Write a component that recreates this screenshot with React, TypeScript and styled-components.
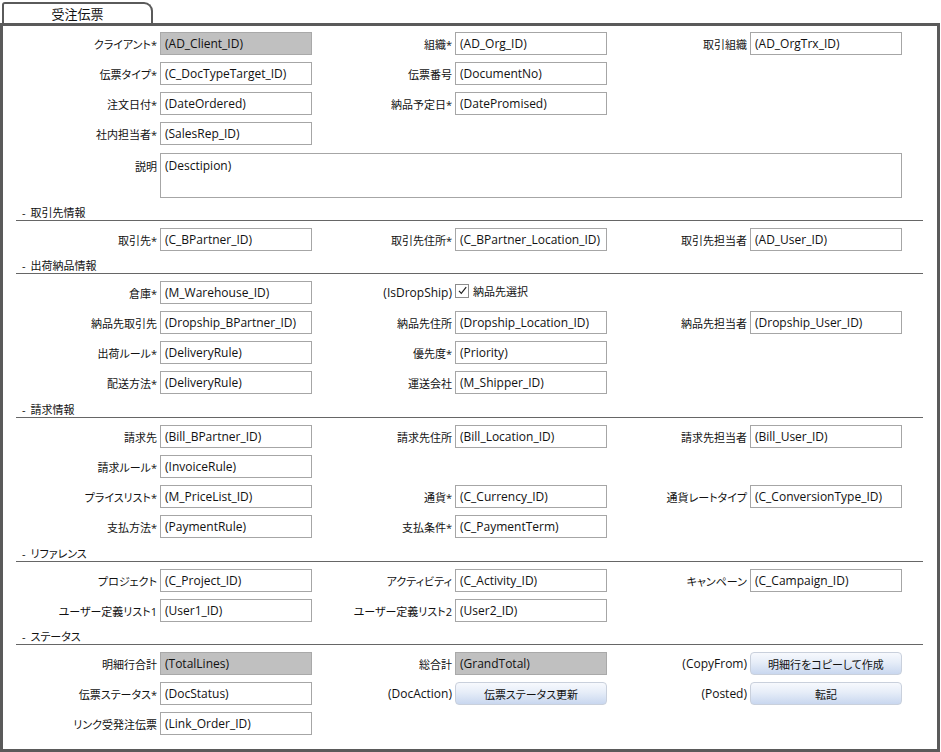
import React from "react";
import styled, { createGlobalStyle } from "styled-components";

const GlobalStyle = createGlobalStyle`
  html, body { margin: 0; padding: 0; background: #ffffff; }
`;

const FONT = `"Open Sans", "Noto Sans CJK JP", sans-serif`;
const BORDER = "#5a5a5a";

const Page = styled.div`
  width: 941px;
  height: 752px;
  padding-top: 2px;
  box-sizing: border-box;
  font-family: ${FONT};
  color: #111;
  overflow: hidden;
`;

const Tab = styled.div`
  margin-left: 2px;
  width: 151px;
  height: 21px;
  box-sizing: border-box;
  border: 2px solid ${BORDER};
  border-bottom: none;
  border-radius: 3px 9px 0 0;
  display: flex;
  align-items: center;
  justify-content: center;
  font-family: "Noto Sans CJK JP", sans-serif;
  font-size: 13px;
  color: #111;
`;

const Frame = styled.div`
  width: 940px;
  height: 729px;
  box-sizing: border-box;
  border: 3px solid ${BORDER};
  padding: 6px 14px 0 13px;
  display: flex;
  flex-direction: column;
  gap: 7px;
`;

const SectionTitle = styled.div<{ $shift?: number }>`
  height: 15px;
  margin-top: ${(p) => p.$shift ?? 0}px;
  border-bottom: 1px solid #666;
  padding-left: 6px;
  display: flex;
  align-items: flex-end;
  gap: 5px;
  font-size: 11px;
  line-height: 14px;
  font-feature-settings: "palt";
  color: #111;
`;

const Row = styled.div<{ $shift?: number }>`
  display: grid;
  grid-template-columns: 295px 295px 295px;
  padding-left: 1px;
  margin-top: ${(p) => p.$shift ?? 0}px;
`;

const Field = styled.div<{ $col: number; $span?: number; $top?: boolean }>`
  grid-column: ${(p) => p.$col} / span ${(p) => p.$span ?? 1};
  display: flex;
  align-items: ${(p) => (p.$top ? "flex-start" : "center")};
`;

const Label = styled.div<{ $latin?: boolean; $top?: boolean }>`
  width: 140px;
  margin-right: 3px;
  text-align: right;
  white-space: nowrap;
  font-size: ${(p) => (p.$latin ? 12 : 11)}px;
  font-feature-settings: "palt";
  padding-top: ${(p) => (p.$top ? 5 : 0)}px;
  color: #111;
`;

const Box = styled.div<{ $readonly?: boolean }>`
  width: 152px;
  height: 23px;
  box-sizing: border-box;
  border: 1px solid ${(p) => (p.$readonly ? "#a9a9a9" : "#a6a6a6")};
  background: ${(p) => (p.$readonly ? "#c0c0c0" : "#ffffff")};
  padding-left: 4px;
  display: flex;
  align-items: center;
  font-size: 12px;
  white-space: nowrap;
  overflow: hidden;
  color: #111;
`;

const AreaBox = styled(Box)`
  width: 742px;
  height: 45px;
  align-items: flex-start;
  padding-top: 3px;
`;

const ActionButton = styled.button`
  width: 152px;
  height: 23px;
  box-sizing: border-box;
  margin: 0;
  padding: 0;
  border: 1px solid #c9d0dc;
  border-radius: 4px;
  background: linear-gradient(#f7f9fd 0%, #e6edf8 45%, #c9d7ef 100%);
  font-family: ${FONT};
  font-size: 11px;
  font-feature-settings: "palt";
  color: #111;
  cursor: pointer;
`;

const CheckWrap = styled.div`
  display: flex;
  align-items: center;
  gap: 4px;
  font-size: 11px;
  font-feature-settings: "palt";
  margin-top: -4px;
`;

const CheckBox = styled.span`
  width: 14px;
  height: 14px;
  box-sizing: border-box;
  border: 1px solid #8c8c8c;
  background: #fff;
  display: flex;
  align-items: center;
  justify-content: center;
`;

type Item =
  | { col: number; label: string; value: string; ro?: boolean; latin?: boolean }
  | { col: number; label: string; button: string; latin?: boolean }
  | { col: number; label: string; check: string; latin?: boolean }
  | { col: number; label: string; area: string; latin?: boolean };

type Section = { title?: string; shift?: number; rows: Item[][] };

const sections: Section[] = [
  {
    rows: [
      [
        { col: 1, label: "クライアント*", value: "(AD_Client_ID)", ro: true },
        { col: 2, label: "組織*", value: "(AD_Org_ID)" },
        { col: 3, label: "取引組織", value: "(AD_OrgTrx_ID)" },
      ],
      [
        { col: 1, label: "伝票タイプ*", value: "(C_DocTypeTarget_ID)" },
        { col: 2, label: "伝票番号", value: "(DocumentNo)" },
      ],
      [
        { col: 1, label: "注文日付*", value: "(DateOrdered)" },
        { col: 2, label: "納品予定日*", value: "(DatePromised)" },
      ],
      [{ col: 1, label: "社内担当者*", value: "(SalesRep_ID)" }],
      [{ col: 1, label: "説明", area: "(Desctipion)" }],
    ],
  },
  {
    title: "取引先情報",
    rows: [
      [
        { col: 1, label: "取引先*", value: "(C_BPartner_ID)" },
        { col: 2, label: "取引先住所*", value: "(C_BPartner_Location_ID)" },
        { col: 3, label: "取引先担当者", value: "(AD_User_ID)" },
      ],
    ],
  },
  {
    title: "出荷納品情報",
    rows: [
      [
        { col: 1, label: "倉庫*", value: "(M_Warehouse_ID)" },
        { col: 2, label: "(IsDropShip)", check: "納品先選択", latin: true },
      ],
      [
        { col: 1, label: "納品先取引先", value: "(Dropship_BPartner_ID)" },
        { col: 2, label: "納品先住所", value: "(Dropship_Location_ID)" },
        { col: 3, label: "納品先担当者", value: "(Dropship_User_ID)" },
      ],
      [
        { col: 1, label: "出荷ルール*", value: "(DeliveryRule)" },
        { col: 2, label: "優先度*", value: "(Priority)" },
      ],
      [
        { col: 1, label: "配送方法*", value: "(DeliveryRule)" },
        { col: 2, label: "運送会社", value: "(M_Shipper_ID)" },
      ],
    ],
  },
  {
    title: "請求情報",
    shift: 1,
    rows: [
      [
        { col: 1, label: "請求先", value: "(Bill_BPartner_ID)" },
        { col: 2, label: "請求先住所", value: "(Bill_Location_ID)" },
        { col: 3, label: "請求先担当者", value: "(Bill_User_ID)" },
      ],
      [{ col: 1, label: "請求ルール*", value: "(InvoiceRule)" }],
      [
        { col: 1, label: "プライスリスト*", value: "(M_PriceList_ID)" },
        { col: 2, label: "通貨*", value: "(C_Currency_ID)" },
        { col: 3, label: "通貨レートタイプ", value: "(C_ConversionType_ID)" },
      ],
      [
        { col: 1, label: "支払方法*", value: "(PaymentRule)" },
        { col: 2, label: "支払条件*", value: "(C_PaymentTerm)" },
      ],
    ],
  },
  {
    title: "リファレンス",
    shift: 1,
    rows: [
      [
        { col: 1, label: "プロジェクト", value: "(C_Project_ID)" },
        { col: 2, label: "アクティビティ", value: "(C_Activity_ID)" },
        { col: 3, label: "キャンペーン", value: "(C_Campaign_ID)" },
      ],
      [
        { col: 1, label: "ユーザー定義リスト1", value: "(User1_ID)" },
        { col: 2, label: "ユーザー定義リスト2", value: "(User2_ID)" },
      ],
    ],
  },
  {
    title: "ステータス",
    rows: [
      [
        { col: 1, label: "明細行合計", value: "(TotalLines)", ro: true },
        { col: 2, label: "総合計", value: "(GrandTotal)", ro: true },
        { col: 3, label: "(CopyFrom)", button: "明細行をコピーして作成", latin: true },
      ],
      [
        { col: 1, label: "伝票ステータス*", value: "(DocStatus)" },
        { col: 2, label: "(DocAction)", button: "伝票ステータス更新", latin: true },
        { col: 3, label: "(Posted)", button: "転記", latin: true },
      ],
      [{ col: 1, label: "リンク受発注伝票", value: "(Link_Order_ID)" }],
    ],
  },
];

const Check = () => (
  <svg width="11" height="11" viewBox="0 0 11 11">
    <path d="M2 5.9 L4.3 8.4 L9.2 2.2" fill="none" stroke="#222" strokeWidth="1.2" />
  </svg>
);

function renderItem(it: Item, key: number) {
  if ("area" in it) {
    return (
      <Field key={key} $col={it.col} $span={3} $top>
        <Label $top>{it.label}</Label>
        <AreaBox>{it.area}</AreaBox>
      </Field>
    );
  }
  if ("button" in it) {
    return (
      <Field key={key} $col={it.col}>
        <Label $latin={it.latin}>{it.label}</Label>
        <ActionButton type="button">{it.button}</ActionButton>
      </Field>
    );
  }
  if ("check" in it) {
    return (
      <Field key={key} $col={it.col}>
        <Label $latin={it.latin}>{it.label}</Label>
        <CheckWrap>
          <CheckBox>
            <Check />
          </CheckBox>
          <span>{it.check}</span>
        </CheckWrap>
      </Field>
    );
  }
  return (
    <Field key={key} $col={it.col}>
      <Label $latin={it.latin}>{it.label}</Label>
      <Box $readonly={it.ro}>{it.value}</Box>
    </Field>
  );
}

export default function App() {
  return (
    <>
      <GlobalStyle />
      <Page>
        <Tab>受注伝票</Tab>
        <Frame>
          {sections.map((s, si) => (
            <React.Fragment key={si}>
              {s.title && (
                <SectionTitle $shift={s.shift}>
                  <span>-</span>
                  <span>{s.title}</span>
                </SectionTitle>
              )}
              {s.rows.map((r, ri) => (
                <Row key={ri} $shift={si === 0 && ri === 4 ? 1 : 0}>
                  {r.map((it, ii) => renderItem(it, ii))}
                </Row>
              ))}
            </React.Fragment>
          ))}
        </Frame>
      </Page>
    </>
  );
}
